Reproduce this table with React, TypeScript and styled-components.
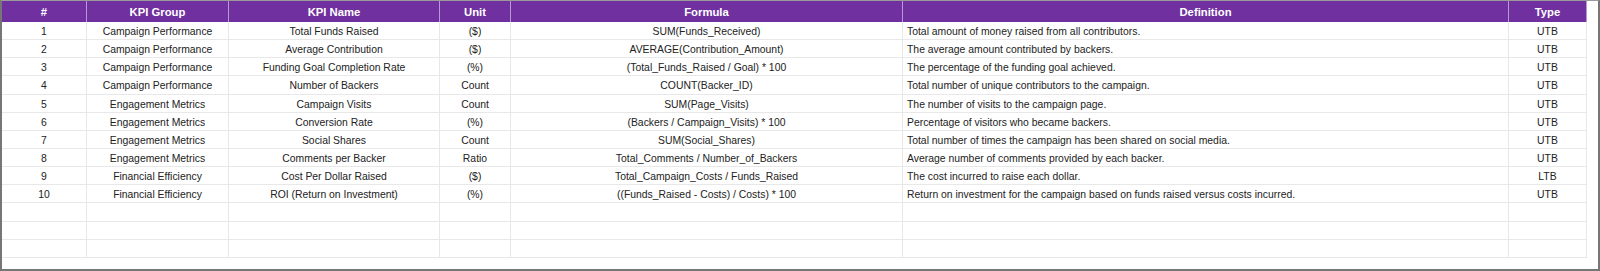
import React from 'react';
import styled, { createGlobalStyle } from 'styled-components';

type Kpi = {
  group: string;
  name: string;
  unit: string;
  formula: string;
  definition: string;
  type: string;
};

const kpis: Kpi[] = [
  { group: 'Campaign Performance', name: 'Total Funds Raised', unit: '($)', formula: 'SUM(Funds_Received)', definition: 'Total amount of money raised from all contributors.', type: 'UTB' },
  { group: 'Campaign Performance', name: 'Average Contribution', unit: '($)', formula: 'AVERAGE(Contribution_Amount)', definition: 'The average amount contributed by backers.', type: 'UTB' },
  { group: 'Campaign Performance', name: 'Funding Goal Completion Rate', unit: '(%)', formula: '(Total_Funds_Raised / Goal) * 100', definition: 'The percentage of the funding goal achieved.', type: 'UTB' },
  { group: 'Campaign Performance', name: 'Number of Backers', unit: 'Count', formula: 'COUNT(Backer_ID)', definition: 'Total number of unique contributors to the campaign.', type: 'UTB' },
  { group: 'Engagement Metrics', name: 'Campaign Visits', unit: 'Count', formula: 'SUM(Page_Visits)', definition: 'The number of visits to the campaign page.', type: 'UTB' },
  { group: 'Engagement Metrics', name: 'Conversion Rate', unit: '(%)', formula: '(Backers / Campaign_Visits) * 100', definition: 'Percentage of visitors who became backers.', type: 'UTB' },
  { group: 'Engagement Metrics', name: 'Social Shares', unit: 'Count', formula: 'SUM(Social_Shares)', definition: 'Total number of times the campaign has been shared on social media.', type: 'UTB' },
  { group: 'Engagement Metrics', name: 'Comments per Backer', unit: 'Ratio', formula: 'Total_Comments / Number_of_Backers', definition: 'Average number of comments provided by each backer.', type: 'UTB' },
  { group: 'Financial Efficiency', name: 'Cost Per Dollar Raised', unit: '($)', formula: 'Total_Campaign_Costs / Funds_Raised', definition: 'The cost incurred to raise each dollar.', type: 'LTB' },
  { group: 'Financial Efficiency', name: 'ROI (Return on Investment)', unit: '(%)', formula: '((Funds_Raised - Costs) / Costs) * 100', definition: 'Return on investment for the campaign based on funds raised versus costs incurred.', type: 'UTB' },
];

const headers = ['#', 'KPI Group', 'KPI Name', 'Unit', 'Formula', 'Definition', 'Type'];
const emptyRows = 3;

export default function App() {
  return (
    <>
      <GlobalStyle />
      <Frame>
        <Sheet>
          {headers.map((h) => (
            <HeadCell key={h}>{h}</HeadCell>
          ))}
          {kpis.map((k, i) => (
            <React.Fragment key={k.name}>
              <Cell>{i + 1}</Cell>
              <Cell>{k.group}</Cell>
              <Cell>{k.name}</Cell>
              <Cell>{k.unit}</Cell>
              <Cell>{k.formula}</Cell>
              <Cell $left>{k.definition}</Cell>
              <Cell>{k.type}</Cell>
            </React.Fragment>
          ))}
          {Array.from({ length: emptyRows * headers.length }).map((_, i) => (
            <Cell key={'e' + i} />
          ))}
        </Sheet>
      </Frame>
    </>
  );
}

const GlobalStyle = createGlobalStyle`
  html, body {
    margin: 0;
    padding: 0;
    background: #ffffff;
  }
`;

const Frame = styled.div`
  box-sizing: border-box;
  width: 1600px;
  height: 271px;
  border: 2px solid #767676;
  border-top: 1px solid #9a9a9a;
  background: #ffffff;
  font-family: 'Liberation Sans', Arial, sans-serif;
  color: #222222;
`;

const Sheet = styled.div`
  display: grid;
  grid-template-columns: 85px 142px 211px 71px 392px 606px 78px;
  grid-template-rows: 21px;
  grid-auto-rows: 18.15px;
  width: 1585px;
`;

const HeadCell = styled.div`
  display: flex;
  align-items: center;
  justify-content: center;
  box-sizing: border-box;
  padding-top: 1px;
  background: #7030a0;
  color: #ffffff;
  font-weight: bold;
  font-size: 11.3px;
  border-right: 1px solid #b59ad0;
  &:last-child {
    border-right: none;
  }
`;

const Cell = styled.div<{ $left?: boolean }>`
  display: flex;
  align-items: center;
  justify-content: ${(p) => (p.$left ? 'flex-start' : 'center')};
  box-sizing: border-box;
  padding: ${(p) => (p.$left ? '2px 0 0 4px' : '2px 0 0 0')};
  font-size: 10.4px;
  white-space: nowrap;
  border-right: 1px solid #e8e8e8;
  border-bottom: 1px solid #e8e8e8;
  overflow: hidden;
`;
